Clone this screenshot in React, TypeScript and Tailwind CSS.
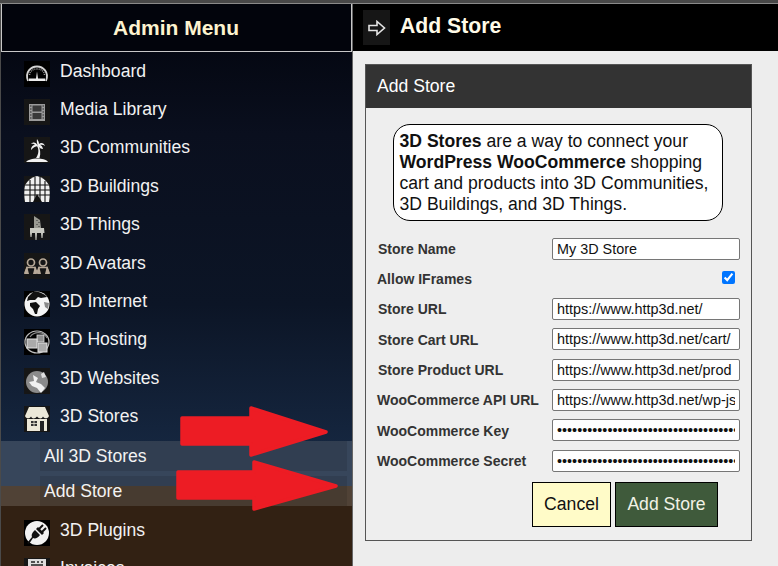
import React from "react";

function Box({ children, dark }: { children: React.ReactNode; dark?: boolean }) {
  return (
    <svg width="26" height="26" viewBox="0 0 26 26" className={dark ? "shrink-0 bg-black" : "shrink-0 bg-[#161616]"}>
      {children}
    </svg>
  );
}
const icons: Record<string, React.ReactNode> = {
  dash: (
    <Box dark>
      <path d="M4 20 C0.500 11 7 5.500 13 5.500 C19 5.500 25.500 11 22 20" fill="none" stroke="#d4d4d4" strokeWidth="1.800" />
      <path d="M5.500 14 C6 10 9 8 13 8 C17 8 20 10 20.500 14" fill="none" stroke="#9a9a9a" strokeWidth="1.500" strokeDasharray="1 1" />
      <path d="M13 10.500 L12 17.500 H5 V20 H21 V17.500 H14 Z" fill="#ececec" />
    </Box>
  ),
  film: (
    <Box>
      <rect x="5" y="5" width="16" height="17" fill="#9b9b9b" />
      <rect x="8.500" y="6.500" width="9" height="6" fill="#3a3a3a" />
      <rect x="8.500" y="14" width="9" height="6" fill="#3a3a3a" />
      <path d="M6 7h1.500M6 10h1.500M6 13h1.500M6 16h1.500M6 19h1.500M18.500 7H20M18.500 10H20M18.500 13H20M18.500 16H20M18.500 19H20" stroke="#2a2a2a" strokeWidth="1.200" />
    </Box>
  ),
  palm: (
    <Box>
      <path d="M13 9 C15 12 15 17 12 21 H15.500 C17 16 16 12 14.500 8.500 Z" fill="#f2f2f2" />
      <path d="M14 9 C12 5 9 4.500 7 7 C9 6.500 10 7 11 8 C8.500 8 7 10 7 13 C9 10.500 11 9.500 14 9 C15.500 11 17 12 19 12 C18.500 9.500 17 8 16 8 C18 7.500 19.500 8 21 9 C20 6 17 5 15 7 C15 5 14 3.500 13 2 C12.500 4 13 7 14 9 Z" fill="#f2f2f2" />
      <path d="M2 25 C5 21 20 20 24 25 Z" fill="#f2f2f2" />
    </Box>
  ),
  build: (
    <Box>
      <path d="M13 0 C18 1 22 4 25 9 C26 14 26 20 25 26 H1 C0 20 0 14 1 9 C4 4 8 1 13 0 Z" fill="#efefef" />
      <path d="M1 9H25M0 14H26M0 19H26M6 4V26M11 1V26M16 1V26M21 5V26" stroke="#111" strokeWidth="1.100" />
      <path d="M9 26 L13 18 L18 26Z" fill="#111" />
    </Box>
  ),
  chair: (
    <Box>
      <path d="M10 2 L16 6 L17 14 H10 Z" fill="#9a9a92" />
      <path d="M13 6v1M15 8v1M13 10v1M15 12v1" stroke="#333" strokeWidth="1" />
      <path d="M6 14 H20 L20.500 19 H19 L18.500 24 H17.500 L17 19 H13 L12.500 26 H11.500 L11 19 H8 L7.500 23 H6.500 L6 19 Z" fill="#c9c9c0" />
    </Box>
  ),
  avatars: (
    <Box>
      <g fill="none" stroke="#b8a998" strokeWidth="1.700">
        <circle cx="7" cy="9.500" r="3.500" />
        <circle cx="19" cy="9.500" r="3.500" />
        <path d="M1 20 L3 14.500 H11 L13 20 M13 20 L15 14.500 H23 L25 20" />
      </g>
      <path d="M0 21 L3 13 L5 21Z M9 21 L11 13 L13 21 L15 13 L17 21Z M21 21 L23 13 L26 21Z" fill="#b8a998" />
    </Box>
  ),
  globe: (
    <Box dark>
      <circle cx="13" cy="13" r="12.500" fill="#f4f4f4" />
      <path d="M9 1 C13 0 20 2 23 6 L17 7 L14 6 L11 9 L6 9 L3 10 L4 6 Z" fill="#111" />
      <path d="M6 12 L12 11 L16 15 L14 18 L13 23 L11 23 L9 18 L6 15 Z" fill="#111" />
      <path d="M20 11 L25 12 L24 18 L21 16 Z" fill="#888" />
    </Box>
  ),
  host: (
    <Box dark>
      <ellipse cx="13" cy="13" rx="12" ry="11" fill="none" stroke="#bdbdbd" strokeWidth="1.200" />
      <path d="M6 8 C10 2 20 2 23 9" fill="none" stroke="#888" strokeWidth="1.200" />
      <rect x="13" y="6" width="7" height="7" fill="#8f8f8f" stroke="#ddd" strokeWidth="0.800" />
      <rect x="3" y="10" width="10" height="9" fill="#aaa" stroke="#e2e2e2" strokeWidth="1" />
      <rect x="14" y="14" width="9" height="9" fill="#aaa" stroke="#e2e2e2" strokeWidth="1" />
    </Box>
  ),
  web: (
    <Box>
      <circle cx="13" cy="14" r="11" fill="#8b8b8b" />
      <path d="M9 7 L14 10 L12 14 L17 16 L21 20 L17 25 L13 20 L8 18 L5 14 L10 13 Z" fill="#f0f0f0" />
      <path d="M17 6 L20 4 L22 9 L18 10 Z" fill="#e0e0e0" />
    </Box>
  ),
  store: (
    <Box>
      <path d="M5 1 H21 L25 10 C24 13 20 13 19 10.500 C18 13 15 13 13 10.500 C11 13 8 13 7 10.500 C6 13 2 13 1 10 Z" fill="#ece8d8" />
      <path d="M3 13 H23 V25 H3 Z" fill="#ece8d8" />
      <rect x="7" y="15" width="6" height="5" fill="#333" />
      <path d="M10 15v5M7 17.500h6" stroke="#ece8d8" strokeWidth="0.800" />
      <rect x="16" y="15" width="4" height="10" fill="#222" />
    </Box>
  ),
  plug: (
    <Box dark>
      <circle cx="13" cy="13" r="12" fill="#f2f2f2" />
      <path d="M3 23 L8 17 C7 14 9 12 11 10 L16 15 C14 18 11 19 9 18 L5 24 Z" fill="#111" />
      <path d="M12 9 L18 15 L20 13 L14 7 Z" fill="#111" />
      <path d="M15 9 L19 5 M18 12 L22 8" stroke="#111" strokeWidth="2" />
    </Box>
  ),
  inv: (
    <Box>
      <rect x="4" y="1" width="18" height="24" fill="#ddd" />
      <path d="M7 4h4M13 4h2M17 4h2M7 7h12M7 10h12" stroke="#222" strokeWidth="1.500" />
    </Box>
  ),
};

function Row({ icon, label }: { icon: string; label: string }) {
  return (
    <div className="flex h-[38.4px] shrink-0 items-start pl-[23px] pt-[10px]">
      {icons[icon]}
      <span className="ml-[10px] text-[17.6px] leading-[20px] text-[#f2f2f2]">{label}</span>
    </div>
  );
}

function Field({ label, value, type = "text", inset }: { label: string; value: string; type?: string; inset?: boolean }) {
  return (
    <div className="flex h-[30.3px] shrink-0 items-start">
      <label className={`${inset ? "pl-[12px]" : "pl-[11px]"} w-[186px] pt-[3.25px] text-[14px] font-bold leading-[16px] text-[#333]`}>{label}</label>
      <input
        readOnly
        type={type}
        value={value}
        className="h-[22px] w-[188px] rounded-[2px] border border-[#767676] bg-white px-[4px] text-[14.4px] text-[#111] outline-none"
      />
    </div>
  );
}

export default function App() {
  return (
    <div className="flex h-[566px] w-[778px] flex-col overflow-hidden bg-[#4a4a4a] font-['Liberation_Sans',Arial,sans-serif]">
      <div className="h-[4px] shrink-0 border-b border-[#8a8a8a] bg-[#484848]" />
      <div className="flex min-h-0 flex-1">
        <aside className="relative ml-px flex w-[352px] shrink-0 flex-col overflow-hidden border-r border-[#666] bg-[linear-gradient(180deg,#02040c_0px,#0a0f1e_130px,#0c1526_300px,#15263f_440px,#15263f_482px,#322113_482px,#322113_100%)]">
          <div className="-mb-[1px] flex h-[47.65px] shrink-0 items-center justify-center border border-t-0 border-[#c8c8c8] bg-[#02040c] pr-[1px] text-[21px] font-bold text-[#fdf3cf]">
            Admin Menu
          </div>
          <Row icon="dash" label="Dashboard" />
          <Row icon="film" label="Media Library" />
          <Row icon="palm" label="3D Communities" />
          <Row icon="build" label="3D Buildings" />
          <Row icon="chair" label="3D Things" />
          <Row icon="avatars" label="3D Avatars" />
          <Row icon="globe" label="3D Internet" />
          <Row icon="host" label="3D Hosting" />
          <Row icon="web" label="3D Websites" />
          <Row icon="store" label="3D Stores" />
          <div className="mb-[4px] mt-[6.35px] flex h-[65px] shrink-0 flex-col gap-[5px] bg-white/15 pl-[39px] pr-[5px]">
            <div className="flex h-[30px] items-center bg-black/10 pl-[4px] text-[17.6px] text-[#f2f2f2]">All 3D Stores</div>
            <div className="flex h-[30px] items-center bg-black/10 pl-[4px] text-[17.6px] text-[#f2f2f2]">Add Store</div>
          </div>
          <Row icon="plug" label="3D Plugins" />
          <Row icon="inv" label="Invoices" />
          <svg className="absolute left-0 top-0" width="352" height="562" viewBox="0 4 352 562">
            <path d="M181 418 H250 V408 L325 432 L250 455 V444 H181 Z" fill="#ed1c24" stroke="#ed1c24" strokeWidth="3.500" strokeLinejoin="round" />
            <path d="M177 472 H253 V462 L335 486 L253 509 V498 H177 Z" fill="#ed1c24" stroke="#ed1c24" strokeWidth="3.500" strokeLinejoin="round" />
          </svg>
        </aside>
        <main className="flex min-w-0 flex-1 flex-col bg-[#ededed]">
          <div className="flex h-[47px] shrink-0 items-center bg-black pl-[10px]">
            <div className="flex h-[35px] w-[27px] items-center justify-center bg-[#161616]">
              <svg width="18" height="16" viewBox="0 0 18 16">
                <path d="M1 5.500 H9 V1.500 L16.500 8 L9 14.500 V10.500 H1 Z" fill="none" stroke="#e4e4e4" strokeWidth="1.600" />
              </svg>
            </div>
            <span className="mb-[3px] ml-[10px] text-[21.2px] font-bold text-[#fffbe8]">Add Store</span>
          </div>
          <div className="ml-[12px] mt-[13px] flex h-[477px] w-[387px] flex-col border border-[#555] bg-[#eee]">
            <div className="flex h-[43px] shrink-0 items-center bg-[#333] pl-[11px] text-[17.6px] text-white">Add Store</div>
            <div className="mx-auto mt-[16px] h-[97px] w-[330px] shrink-0 -translate-x-[1px] rounded-[17px] border border-black bg-white px-[6px] py-[6px] text-[17.6px] leading-[21px] text-[#111]">
              <b>3D Stores</b> are a way to connect your <b>WordPress WooCommerce</b> shopping cart and products into 3D Communities, 3D Buildings, and 3D Things.
            </div>
            <div className="mt-[16.55px] flex flex-col">
              <Field inset label="Store Name" value="My 3D Store" />
              <div className="flex h-[30.3px] shrink-0 items-start">
                <label className="w-[356px] pl-[11px] pt-[3.25px] text-[14px] font-bold leading-[16px] text-[#333]">Allow IFrames</label>
                <input type="checkbox" readOnly checked className="mt-[3px] h-[13px] w-[13px]" />
              </div>
              <Field inset label="Store URL" value="https://www.http3d.net/" />
              <Field inset label="Store Cart URL" value="https://www.http3d.net/cart/" />
              <Field inset label="Store Product URL" value="https://www.http3d.net/prod" />
              <Field label="WooCommerce API URL" value="https://www.http3d.net/wp-json/wc/v3/" />
              <Field label="WooCommerce Key" type="password" value="ck_0123456789012345678901234567890123456789" />
              <Field label="WooCommerce Secret" type="password" value="cs_0123456789012345678901234567890123456789" />
            </div>
            <div className="ml-[166px] mt-[2px] flex gap-[4px]">
              <button className="h-[45px] w-[79px] border border-black bg-[#fffbc8] text-[17.6px] text-[#111]">Cancel</button>
              <button className="h-[45px] w-[103px] border border-black bg-[#3f5a3b] text-[17.6px] text-[#f2f2e6]">Add Store</button>
            </div>
          </div>
        </main>
      </div>
    </div>
  );
}
